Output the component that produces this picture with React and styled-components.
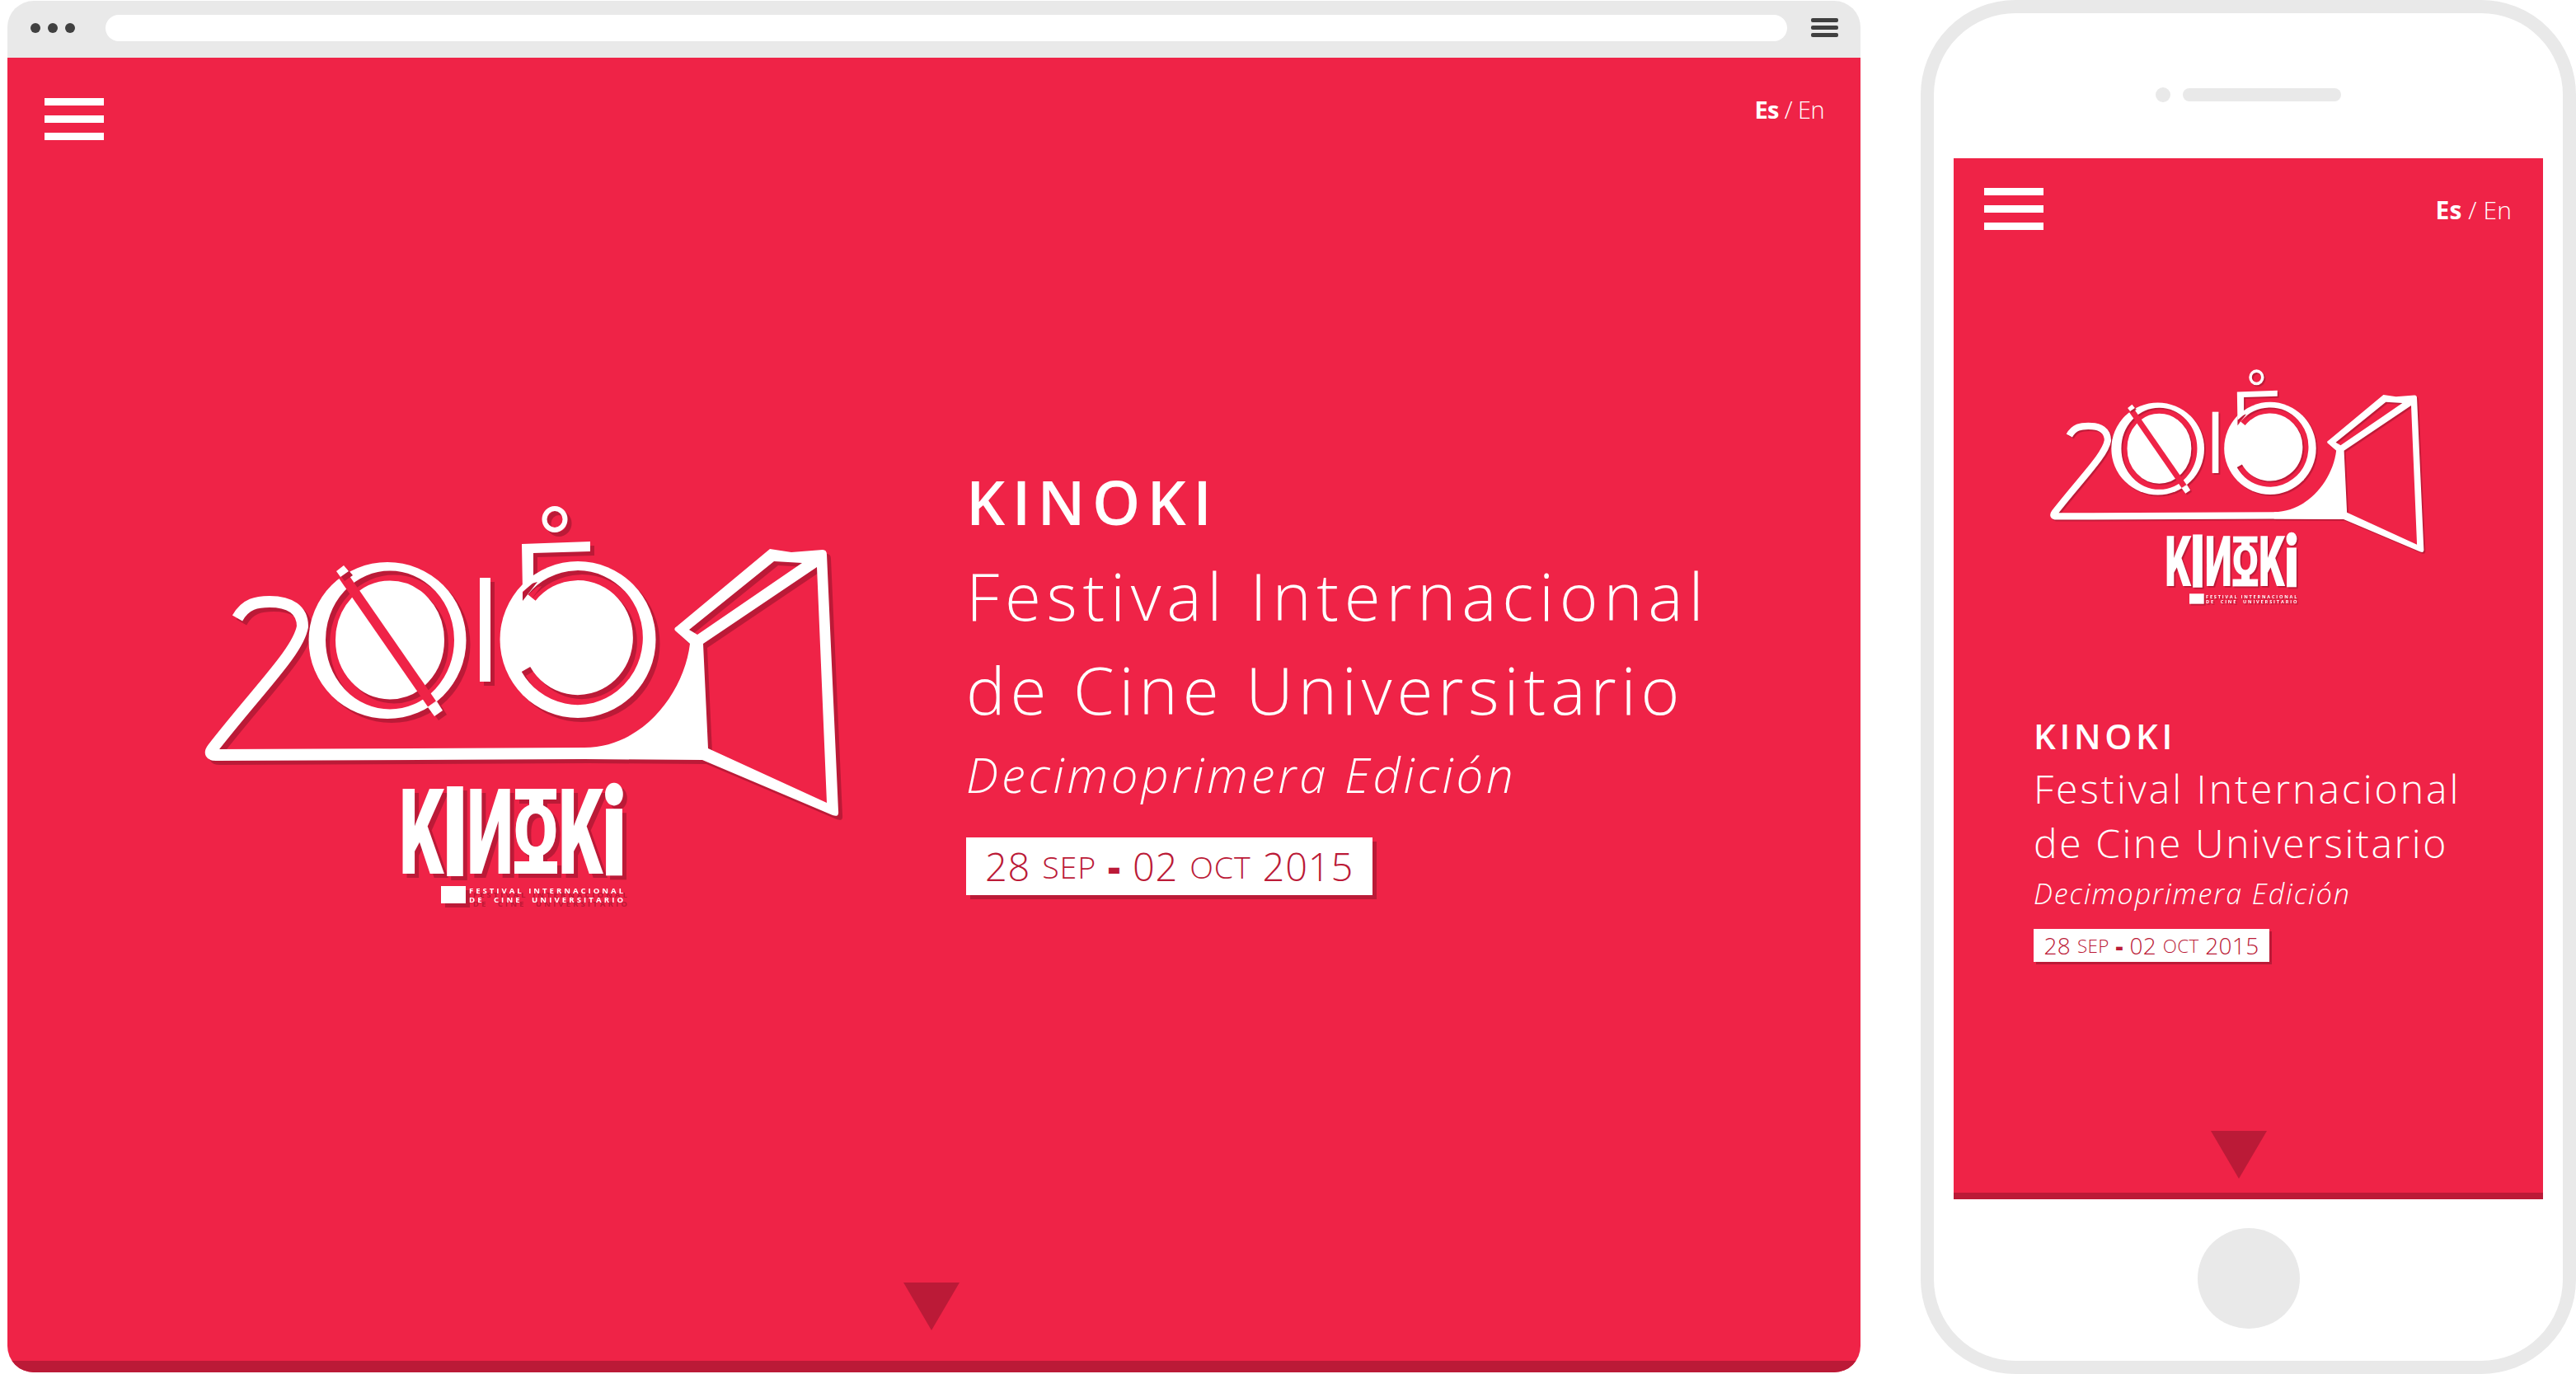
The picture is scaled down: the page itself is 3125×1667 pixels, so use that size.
import React from "react";
import styled, { createGlobalStyle } from "styled-components";

const RED = "#ef2347";
const DARK = "#bb1a37";
const GREY = "#e9e9e9";

const GlobalStyle = createGlobalStyle`
  html, body {
    margin: 0;
    padding: 0;
    background: #fff;
    font-family: "Open Sans", "Liberation Sans", sans-serif;
  }
`;

const Page = styled.div`
  display: flex;
  align-items: flex-start;
  width: 3125px;
  height: 1667px;
  padding-left: 9px;
  box-sizing: border-box;
  overflow: hidden;
`;

/* browser mock */
const Browser = styled.div`
  display: flex;
  flex-direction: column;
  flex: none;
  width: 2248px;
  height: 1664px;
  margin-top: 1px;
  margin-right: 73px;
  border-radius: 32px;
  overflow: hidden;
`;

const BrowserBar = styled.div`
  display: flex;
  align-items: center;
  flex: none;
  height: 69px;
  padding: 0 27px 3px 28px;
  background: ${GREY};
  box-sizing: border-box;
`;

const Dots = styled.div`
  display: flex;
  gap: 9px;
  margin-right: 37px;
`;

const Dot = styled.span`
  width: 12px;
  height: 12px;
  border-radius: 50%;
  background: #404040;
`;

const UrlBar = styled.div`
  flex: 1;
  height: 32px;
  margin-right: 29px;
  border-radius: 16px;
  background: #fff;
`;

const BarMenu = styled.div`
  display: flex;
  flex-direction: column;
  gap: 4px;
  width: 33px;
  margin-bottom: 2px;
`;

const BarMenuLine = styled.span`
  height: 5px;
  border-radius: 2px;
  background: #404040;
`;

/* phone mock */
const Phone = styled.div`
  display: flex;
  flex-direction: column;
  align-items: center;
  flex: none;
  width: 795px;
  height: 1667px;
  padding-top: 89px;
  border: 16px solid ${GREY};
  border-radius: 115px;
  box-sizing: border-box;
`;

const Earpiece = styled.div`
  display: flex;
  align-items: center;
  gap: 15px;
  height: 19px;
  margin-bottom: 68px;
`;

const Camera = styled.span`
  width: 18px;
  height: 18px;
  border-radius: 50%;
  background: ${GREY};
`;

const Speaker = styled.span`
  width: 192px;
  height: 16px;
  border-radius: 8px;
  background: ${GREY};
`;

const HomeButton = styled.div`
  flex: none;
  width: 124px;
  height: 122px;
  margin-top: 35px;
  border-radius: 50%;
  background: ${GREY};
`;

/* the site shown in both mocks */
const Screen = styled.div`
  display: flex;
  flex-direction: column;
  flex: 1;
  ${(p) => p.$phone && "flex: none; width: 715px; height: 1263px;"}
  border-bottom: ${(p) => (p.$phone ? 8 : 14)}px solid ${DARK};
  background: ${RED};
  box-sizing: border-box;
`;

const Nav = styled.div`
  display: flex;
  justify-content: space-between;
  align-items: flex-start;
  flex: none;
  padding: ${(p) => (p.$phone ? "36px 38px 0 37px" : "49px 44px 0 45px")};
`;

const Burger = styled.div`
  display: flex;
  flex-direction: column;
  gap: 12.5px;
  width: 72px;
`;

const BurgerLine = styled.span`
  height: 8.7px;
  background: #fff;
`;

const Lang = styled.div`
  margin-top: ${(p) => (p.$phone ? 3 : -10)}px;
  color: #fff;
  font-size: ${(p) => (p.$phone ? 30 : 29)}px;
  font-weight: 300;
  line-height: 48px;
  letter-spacing: ${(p) => (p.$phone ? 0.1 : -0.6)}px;
`;

const LangActive = styled.b`
  font-weight: 700;
`;

const Hero = styled.div`
  display: flex;
  flex-direction: ${(p) => (p.$phone ? "column" : "row")};
  align-items: flex-start;
  padding-left: ${(p) => (p.$phone ? 97 : 231)}px;
  margin-top: ${(p) => (p.$phone ? 161 : 382)}px;
`;

const LogoBox = styled.svg`
  display: block;
  flex: none;
  width: ${(p) => (p.$phone ? 466 : 790)}px;
  height: ${(p) => (p.$phone ? 301 : 510)}px;
  margin: ${(p) => (p.$phone ? "0 0 120px 15px" : "48px 142px 0 0")};
`;

const Shadowed = styled.g`
  filter: drop-shadow(${(p) => (p.$phone ? "3px 3px" : "5px 5px")} 0 ${DARK});
`;

const LogoCaption = styled.text`
  font-family: "Open Sans", sans-serif;
  font-size: 9.5px;
  font-weight: 700;
  fill: #fff;
  white-space: pre;
`;

const LogoGlyph = styled.text`
  font-family: Roboto, "Liberation Sans", sans-serif;
  font-size: 100px;
  font-weight: 900;
  fill: #fff;
  stroke: #fff;
  stroke-width: ${(p) => p.$thicken || 0}px;
`;

const Copy = styled.div`
  display: flex;
  flex-direction: column;
  align-items: flex-start;
`;

const Kicker = styled.div`
  color: #fff;
  font-weight: 600;
  font-size: ${(p) => (p.$phone ? 42 : 74)}px;
  line-height: ${(p) => (p.$phone ? 63 : 113)}px;
  letter-spacing: ${(p) => (p.$phone ? 4.6 : 8.4)}px;
`;

const Title = styled.div`
  color: #fff;
  font-weight: 300;
  white-space: nowrap;
  font-size: ${(p) => (p.$phone ? 48 : 80)}px;
  line-height: ${(p) => (p.$phone ? 66 : 114)}px;
  letter-spacing: ${(p) => p.$tracking}px;
`;

const Edition = styled.div`
  color: #fff;
  font-weight: 300;
  font-style: italic;
  white-space: nowrap;
  font-size: ${(p) => (p.$phone ? 34 : 58)}px;
  line-height: ${(p) => (p.$phone ? 56 : 93)}px;
  letter-spacing: ${(p) => (p.$phone ? 1.95 : 3.85)}px;
`;

const DateBox = styled.div`
  display: flex;
  align-items: center;
  justify-content: center;
  box-sizing: border-box;
  color: ${DARK};
  background: #fff;
  font-weight: 300;
  white-space: nowrap;
  gap: ${(p) => (p.$phone ? 0.28 : 0.3)}em;
  letter-spacing: ${(p) => (p.$phone ? 0.3 : 0.8)}px;
  font-size: ${(p) => (p.$phone ? 28 : 47)}px;
  width: ${(p) => (p.$phone ? 286 : 493)}px;
  height: ${(p) => (p.$phone ? 40 : 70)}px;
  margin-top: ${(p) => (p.$phone ? 15 : 30)}px;
  box-shadow: ${(p) => (p.$phone ? "3px 3px" : "5px 5px")} 0 ${DARK};
`;

const DateMonth = styled.span`
  font-size: 0.8em;
`;

const DateDash = styled.b`
  font-weight: 800;
`;

const Arrow = styled.div`
  flex: none;
  width: 0;
  height: 0;
  margin-top: auto;
  margin-left: ${(p) => (p.$phone ? 312 : 1087)}px;
  margin-bottom: ${(p) => (p.$phone ? 17 : 37)}px;
  border-style: solid;
  border-width: 58px 34px 0;
  border-color: ${DARK} transparent transparent;
`;

// letters of the wordmark: real text, each squeezed into its cell of the logo
const GLYPHS = [
  { ch: "K", x: 244, w: 54 },
  { ch: "I", x: 298, w: 28, thicken: 4 },
  { ch: "N", x: 326, w: 57, mirror: true },
  { ch: "O", x: 383, y: 376, w: 54, h: 62 },
  { ch: "K", x: 437, w: 54 },
  { ch: "i", x: 491, w: 28, thicken: 3 },
];

const CAP = 71; // cap height of the logo font at 100px

function Logo({ phone }) {
  const cutId = phone ? "logo-cut-phone" : "logo-cut-desk";

  return (
    <LogoBox $phone={phone} viewBox="0 0 790 510" role="img" aria-label="KINOKI 2015">
      <defs>
        <mask id={cutId} maskUnits="userSpaceOnUse" x="0" y="0" width="790" height="510">
          <rect width="790" height="510" fill="#fff" />
          <ellipse cx="233" cy="176.5" rx="72" ry="78" fill="none" stroke="#000" strokeWidth="12" />
          <path d="M398 212A73 75.5 0 1 0 405 125" fill="none" stroke="#000" strokeWidth="12" />
          <path d="M394 111L394 129L412 106Z" fill="#000" />
        </mask>
      </defs>

      <Shadowed $phone={phone}>
        <path
          d="M48 150C58 132 72 130 87 130C112 130 127 140 127 160C122 190 75 235 18 308Q12 316 22 316L470 314L612 314"
          fill="none"
          stroke="#fff"
          strokeWidth="14"
          strokeLinejoin="round"
        />
        <g mask={`url(#${cutId})`} fill="#fff">
          <ellipse cx="230" cy="177" rx="95.5" ry="95" />
          <ellipse cx="461" cy="176" rx="94.5" ry="95" />
        </g>
        <rect x="342" y="101" width="13" height="126" fill="#fff" />
        <ellipse cx="433" cy="30" rx="12.5" ry="13" fill="none" stroke="#fff" strokeWidth="6" />
        <path d="M393 60L476 57L476 69L407 71L407 107L394 118Z" fill="#fff" />
        <path
          fillRule="evenodd"
          fill="#fff"
          d="M597 181L579 165Q577 162 581 160L694 66L720 70L758 67Q763 67 763 73L777 384Q778 392 770 389L612 322L469 321L469 307C540 307 590 240 597 181Z
             M613 181L751 88L763 374L619 308Z
             M699 81L733 83L606 170L596 164Z"
        />
        {GLYPHS.map(({ ch, x, y = 357, w, h = 103, mirror, thicken }, i) => (
          <LogoGlyph
            key={i}
            $thicken={thicken}
            textLength={w}
            lengthAdjust="spacingAndGlyphs"
            transform={`translate(${mirror ? x + w : x} ${y + h}) scale(${mirror ? -1 : 1} ${h / CAP})`}
          >
            {ch}
          </LogoGlyph>
        ))}
        <rect x="385" y="357" width="50" height="13" fill="#fff" />
        <rect x="402" y="368" width="17" height="10" fill="#fff" />
        <rect x="402" y="436" width="17" height="10" fill="#fff" />
        <rect x="384" y="445" width="52" height="15" fill="#fff" />
        <rect x="295" y="475" width="30" height="21" fill="#fff" />
        <LogoCaption x="329" y="484" textLength="187">FESTIVAL INTERNACIONAL</LogoCaption>
        <LogoCaption x="329" y="495" textLength="187">{"DE  CINE  UNIVERSITARIO"}</LogoCaption>
      </Shadowed>

      {/* slash of the zero stays flat, its two ends lie on top */}
      <line x1="176" y1="98" x2="284" y2="254" stroke={RED} strokeWidth="12" />
      <Shadowed $phone={phone}>
        <path d="M168 93L177 86L183 93L173 100Z" fill="#fff" />
        <path d="M279 258L290 251L297 262L287 269Z" fill="#fff" />
      </Shadowed>
    </LogoBox>
  );
}

function Site({ phone }) {
  return (
    <Screen $phone={phone}>
      <Nav $phone={phone}>
        <Burger>
          <BurgerLine />
          <BurgerLine />
          <BurgerLine />
        </Burger>
        <Lang $phone={phone}>
          <LangActive>Es</LangActive> / En
        </Lang>
      </Nav>
      <Hero $phone={phone}>
        <Logo phone={phone} />
        <Copy>
          <Kicker $phone={phone}>KINOKI</Kicker>
          <Title $phone={phone} $tracking={phone ? 3 : 6.7}>Festival Internacional</Title>
          <Title $phone={phone} $tracking={phone ? 2.6 : 5.9}>de Cine Universitario</Title>
          <Edition $phone={phone}>Decimoprimera Edición</Edition>
          <DateBox $phone={phone}>
            <span>28</span>
            <DateMonth>SEP</DateMonth>
            <DateDash>-</DateDash>
            <span>02</span>
            <DateMonth>OCT</DateMonth>
            <span>2015</span>
          </DateBox>
        </Copy>
      </Hero>
      <Arrow $phone={phone} />
    </Screen>
  );
}

export default function App() {
  return (
    <>
      <GlobalStyle />
      <Page>
        <Browser>
          <BrowserBar>
            <Dots>
              <Dot />
              <Dot />
              <Dot />
            </Dots>
            <UrlBar />
            <BarMenu>
              <BarMenuLine />
              <BarMenuLine />
              <BarMenuLine />
            </BarMenu>
          </BrowserBar>
          <Site />
        </Browser>
        <Phone>
          <Earpiece>
            <Camera />
            <Speaker />
          </Earpiece>
          <Site phone />
          <HomeButton />
        </Phone>
      </Page>
    </>
  );
}
